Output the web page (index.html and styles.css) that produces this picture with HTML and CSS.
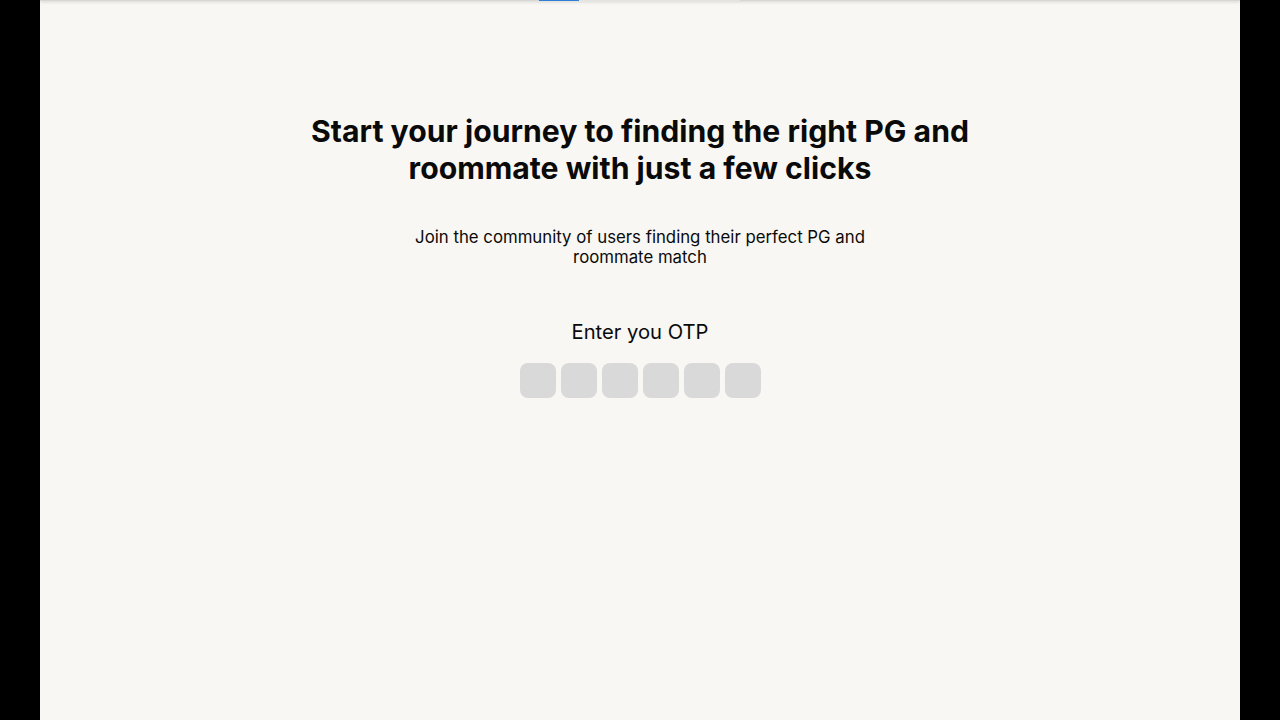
FILE: index.html
```html
<!DOCTYPE html>
<html lang="en">
<head>
<meta charset="utf-8">
<title>Verify OTP</title>
<link rel="stylesheet" href="styles.css">
</head>
<body>
<div class="page">
  <div class="topbar">
    <div class="progress"><div class="progress-fill" style="width:20%"></div></div>
  </div>
  <main class="content">
    <h1 class="title">Start your journey to finding the right PG and roommate with just a few clicks</h1>
    <p class="subtitle">Join the community of users finding their perfect PG and roommate match</p>
    <div class="otp">
      <p class="otp-label">Enter you OTP</p>
      <div class="otp-boxes">
        <input class="otp-box" maxlength="1">
        <input class="otp-box" maxlength="1">
        <input class="otp-box" maxlength="1">
        <input class="otp-box" maxlength="1">
        <input class="otp-box" maxlength="1">
        <input class="otp-box" maxlength="1">
      </div>
    </div>
  </main>
</div>
</body>
</html>
```
FILE: styles.css
```css
html, body {
  margin: 0;
  padding: 0;
  height: 100%;
  background: #000;
}
body {
  font-family: Inter, "Noto Sans", sans-serif;
  color: #0a0a0a;
}
.page {
  width: 1200px;
  height: 720px;
  margin: 0 auto;
  background: #f8f7f3;
  display: flex;
  flex-direction: column;
  overflow: hidden;
}
.topbar {
  height: 1px;
  display: flex;
  justify-content: center;
  box-shadow: 0 1px 3px rgba(0,0,0,0.25);
  background: #d6d6d4;
}
.progress {
  width: 201px;
  height: 1px;
  background: #e4e4e2;
  margin-left: -1px;
}
.progress-fill {
  height: 100%;
  background: #2f7fd6;
}
.content {
  display: flex;
  flex-direction: column;
  align-items: center;
  padding-top: 112px;
  text-align: center;
}
.title {
  margin: 0;
  width: 680px;
  font-size: 30.2px;
  line-height: 37px;
  font-weight: 700;
  letter-spacing: 0;
}
.subtitle {
  margin: 40px 0 0;
  width: 480px;
  font-size: 16.8px;
  line-height: 20px;
  font-weight: 400;
}
.otp {
  margin-top: 53px;
  display: flex;
  flex-direction: column;
  align-items: center;
}
.otp-label {
  margin: 0;
  font-size: 20.2px;
  line-height: 24px;
}
.otp-boxes {
  margin-top: 19px;
  display: flex;
  gap: 5px;
}
.otp-box {
  width: 36px;
  height: 35px;
  box-sizing: border-box;
  border: none;
  border-radius: 8px;
  background: #d9d9d9;
  padding: 0;
  text-align: center;
  font: inherit;
  font-size: 18px;
  outline: none;
}
```
